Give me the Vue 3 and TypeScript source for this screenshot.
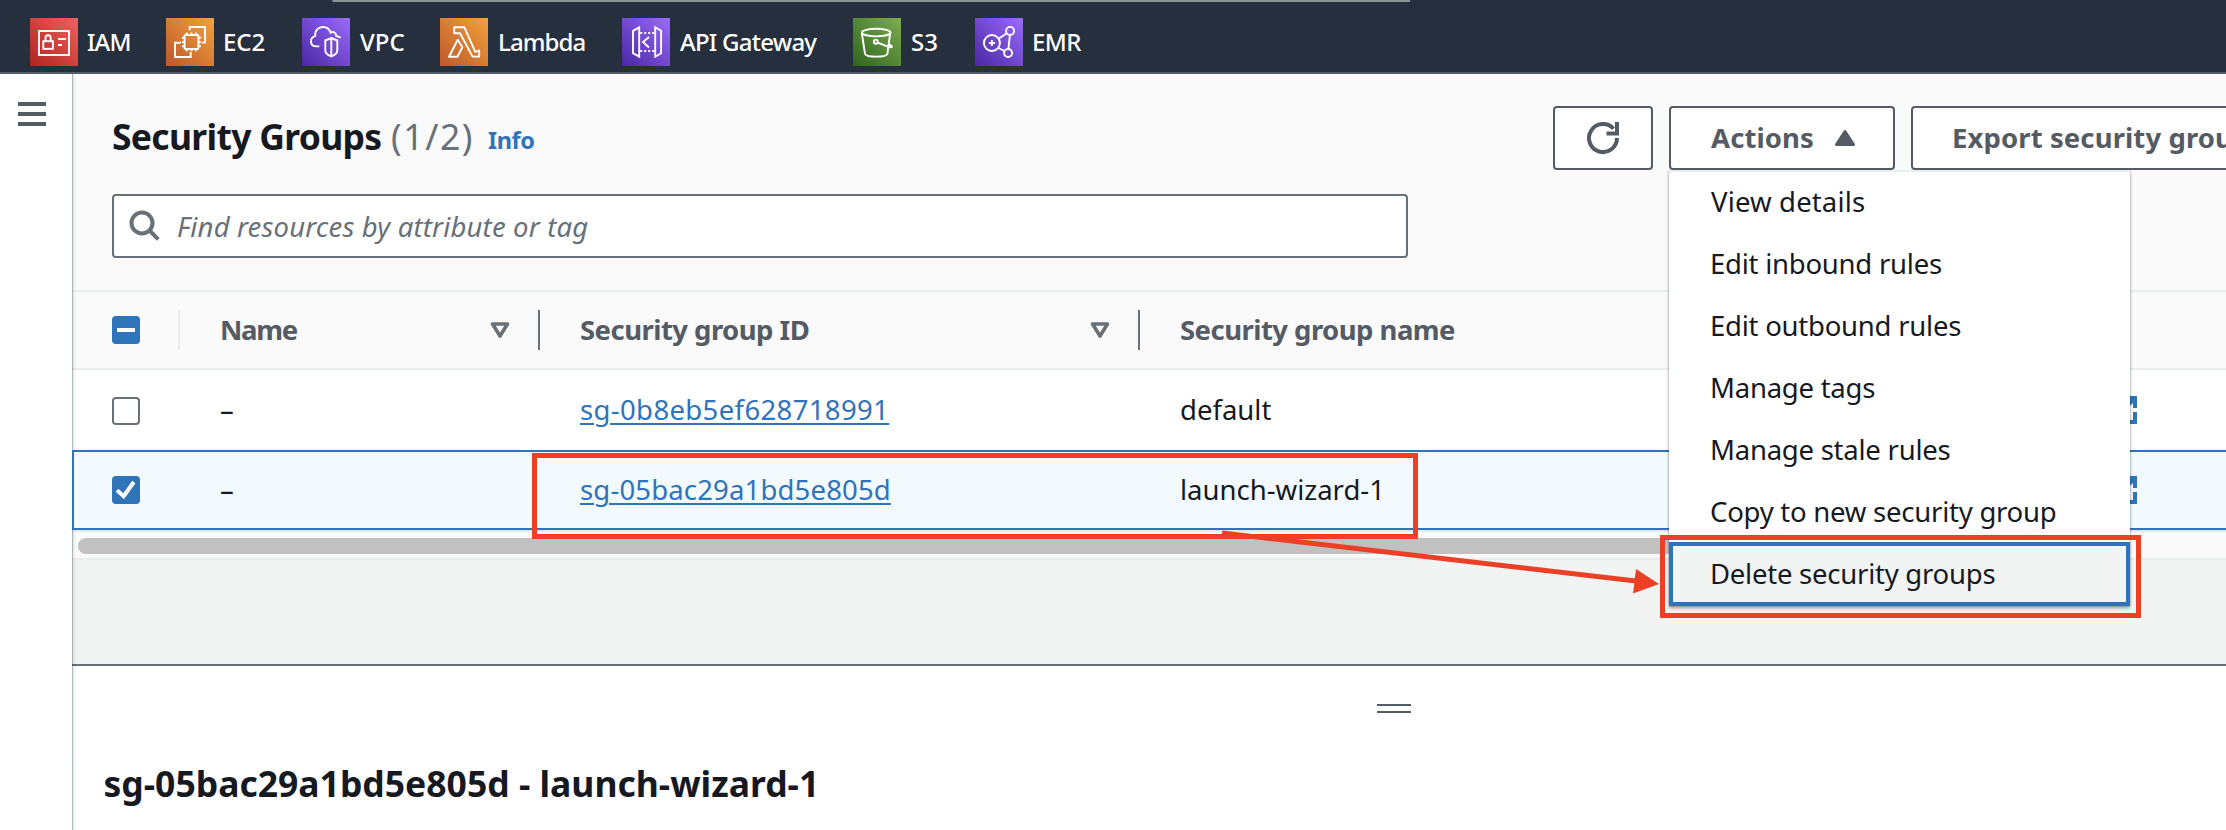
<script setup lang="ts">
interface Service { name: string; icon: string; tone: string; cls: string }
interface GroupRow { id: string; name: string; selected: boolean }

const services: Service[] = [
  { name: 'IAM', icon: 'iam', tone: 'red', cls: 'w-iam' },
  { name: 'EC2', icon: 'ec2', tone: 'orange', cls: 'w-ec2' },
  { name: 'VPC', icon: 'vpc', tone: 'purple', cls: 'w-vpc' },
  { name: 'Lambda', icon: 'lambda', tone: 'orange', cls: 'w-lambda' },
  { name: 'API Gateway', icon: 'api', tone: 'purple', cls: 'w-api' },
  { name: 'S3', icon: 's3', tone: 'green', cls: 'w-s3' },
  { name: 'EMR', icon: 'emr', tone: 'purple', cls: 'w-emr' },
]

const rows: GroupRow[] = [
  { id: 'sg-0b8eb5ef628718991', name: 'default', selected: false },
  { id: 'sg-05bac29a1bd5e805d', name: 'launch-wizard-1', selected: true },
]

const actions: string[] = [
  'View details',
  'Edit inbound rules',
  'Edit outbound rules',
  'Manage tags',
  'Manage stale rules',
  'Copy to new security group',
  'Delete security groups',
]
</script>

<template>
  <div class="page">
    <header class="topbar">
      <span class="topbar-edge"></span>
      <a v-for="s in services" :key="s.name" class="service" :class="s.cls">
        <svg class="service-icon" :class="s.tone" viewBox="0 0 48 48" fill="none" stroke="#fff" stroke-width="1.9">
          <g v-if="s.icon === 'iam'">
            <rect x="9" y="13" width="30" height="24" />
            <rect x="13.3" y="23.2" width="9.6" height="7.6" />
            <path d="M15.5 23v-3.2a2.6 2.6 0 0 1 5.2 0V23M28 21h8M28 27h4" />
          </g>
          <g v-else-if="s.icon === 'ec2'">
            <rect x="18.6" y="17" width="13.8" height="14" rx="1" />
            <path d="M20.8 17v-2.6M25.5 17v-2.6M30 17v-2.6M20.8 31v2.2M25.5 31v2.2M30 31v2.2M18.6 19.7H16M18.6 24H16M18.6 28.3H16M32.4 19.7h2.4M32.4 24h2.4M32.4 28.3h2.4" />
            <path d="M23.7 12.2V9H39v15.6h-3.4M15 24.8H9V39h15.7v-5" />
          </g>
          <g v-else-if="s.icon === 'vpc'">
            <path d="M17.3 28.4h-2.6C11 28.4 9 26.2 9 23.4c0-2.8 1.8-4.7 4.3-5.5C12.6 12.400 16.5 9 21 9c4.2 0 6.5 2.3 7.6 5.7 2.6-1.7 5.5-.3 5.7 3.300 1.7.3 3 .9 4.3 1.7" />
            <path d="M29.3 20l6 2.5v10c0 3-2.6 4.6-6 5.9-3.400-1.300-6-2.9-6-5.9v-10zM29.3 20v18.3" />
          </g>
          <g v-else-if="s.icon === 'lambda'" stroke-linejoin="round">
            <path d="M14.2 9.3h10.2l10.9 24.5 3.9-1.3v6.1h-6.6L20 15.2h-5.8z" />
            <path d="M17.7 21.8l4.7 7.4-5 9.5H9z" />
          </g>
          <g v-else-if="s.icon === 'api'">
            <path d="M17.2 9.3L11 12.8v22.4l6.2 3.5zM33.2 9.3l5.9 3.5v22.4l-5.9 3.5zM27 19l-6 5 6 5.5" />
            <path stroke-dasharray="2 2" d="M18.2 15h14M18.2 33h14" />
          </g>
          <g v-else-if="s.icon === 's3'">
            <ellipse cx="23.2" cy="14.6" rx="14.4" ry="3.8" />
            <path d="M8.8 15l3.2 20.7c1 3.9 21.4 3.9 22.4 0l2.8-20.7" />
            <circle cx="22.8" cy="23.8" r="2" />
            <path d="M24.6 24.7l10.9 4.2c2.3.7 3.5.5 3.5-.4 0-.6-1-1.3-2.9-2.2" />
          </g>
          <g v-else>
            <circle cx="16.9" cy="25" r="8" />
            <circle cx="35.1" cy="12.9" r="4" />
            <circle cx="33.1" cy="35" r="4" />
            <path d="M16.9 22v6M13.9 25h6M23.6 20.7l8.2-5.5M23.4 30l6.2 3M34.9 17l-1.5 14" />
          </g>
        </svg>
        <span>{{ s.name }}</span>
      </a>
    </header>

    <div class="body">
      <aside class="rail">
        <div class="burger"><i></i><i></i><i></i></div>
      </aside>

      <main class="main">
        <section class="panel-head">
          <div class="title-row">
            <h1>Security Groups</h1>
            <span class="count">(1/2)</span>
            <a class="info">Info</a>
            <div class="buttons">
              <button class="btn refresh">
                <svg width="34" height="34" viewBox="0 0 34 34" fill="none" stroke="#545b64" stroke-width="4">
                  <path d="M31 17A14 14 0 1 1 27.5 7.8" />
                  <path d="M31 1v11.5H20.5" />
                </svg>
              </button>
              <button class="btn actions">
                <span>Actions</span>
                <svg width="22" height="18" viewBox="0 0 22 18"><path d="M11 2.5L19.5 15.5H2.5z" fill="#545b64" stroke="#545b64" stroke-width="3" stroke-linejoin="round" /></svg>
              </button>
              <button class="btn export">Export security groups to CSV</button>
            </div>
          </div>
          <div class="search">
            <svg width="32" height="32" viewBox="0 0 32 32" fill="none" stroke="#687078" stroke-width="4">
              <circle cx="13" cy="13" r="10.5" />
              <path d="M20.5 20.5l8.8 8.8" />
            </svg>
            <span>Find resources by attribute or tag</span>
          </div>
        </section>

        <div class="grid head">
          <div class="cell pick"><span class="box on"><i class="minus"></i></span></div>
          <div class="cell name"><span class="t-name">Name</span>
            <svg width="20" height="17" viewBox="0 0 20 17"><path d="M2.5 2h15L10 14z" fill="none" stroke="#687078" stroke-width="3.6" stroke-linejoin="round" /></svg>
          </div>
          <div class="cell gid"><span>Security group ID</span>
            <svg width="20" height="17" viewBox="0 0 20 17"><path d="M2.5 2h15L10 14z" fill="none" stroke="#687078" stroke-width="3.6" stroke-linejoin="round" /></svg>
          </div>
          <div class="cell gname"><span>Security group name</span></div>
        </div>

        <div v-for="r in rows" :key="r.id" class="grid row" :class="{ selected: r.selected }">
          <div class="cell pick">
            <span class="box" :class="{ on: r.selected }">
              <svg v-if="r.selected" width="28" height="28" viewBox="0 0 28 28" fill="none" stroke="#fff" stroke-width="4"><path d="M5 14.2l6.7 6L21.8 6" /></svg>
            </span>
          </div>
          <div class="cell name"><span>–</span></div>
          <div class="cell gid"><a class="link">{{ r.id }}</a></div>
          <div class="cell gname"><span>{{ r.name }}</span></div>
          <div class="cell ext">
            <svg width="28" height="28" viewBox="0 0 28 28" fill="none" stroke="#2f73b8" stroke-width="4">
              <path d="M12 2H2v24h24V16M16 2h10v10M26 2L12 16" />
            </svg>
          </div>
        </div>

        <div class="scroll"><span></span></div>
        <div class="filler"></div>

        <section class="split">
          <div class="handle"></div>
          <h2>sg-05bac29a1bd5e805d - launch-wizard-1</h2>
        </section>
      </main>
    </div>

    <ul class="menu">
      <li v-for="(a, i) in actions" :key="a" :class="{ focused: i === actions.length - 1 }">{{ a }}</li>
    </ul>

    <div class="mark mark-row"></div>
    <div class="mark mark-item"></div>
    <svg class="arrow" width="460" height="80" viewBox="0 0 460 80">
      <path d="M22 13L436 61" stroke="#eb4026" stroke-width="5" />
      <path d="M459 64L436 49L433 73.5z" fill="#eb4026" />
    </svg>
  </div>
</template>

<style>
body { margin: 0; overflow: hidden; }
</style>

<style scoped>
.page {
  position: relative;
  display: flex;
  flex-direction: column;
  width: 2226px;
  height: 830px;
  overflow: hidden;
  background: #fff;
  color: #16191f;
  font-family: "Noto Sans", "Open Sans", sans-serif;
  font-size: 27.5px;
  line-height: 36px;
}
.page * { box-sizing: border-box; }
.page svg { display: block; flex: none; }

.topbar {
  position: relative;
  flex: none;
  display: flex;
  align-items: center;
  height: 74px;
  padding: 12px 0 0 30px;
  background: #262f3e;
  border-bottom: 2px solid #545b69;
}
.topbar-edge {
  position: absolute;
  left: 332px;
  top: 0;
  width: 1078px;
  height: 2px;
  border-radius: 0 0 0 3px;
  background: #879596;
}
.service { display: flex; align-items: center; gap: 9px; color: #fff; font-size: 24px; font-weight: 500; white-space: nowrap; flex: none; }
.service-icon { width: 48px; height: 48px; }
.red { background: linear-gradient(45deg, #ae2320, #f0625d); }
.orange { background: linear-gradient(45deg, #bd582d, #f3a23a); }
.purple { background: linear-gradient(45deg, #4927a4, #9b6bfb); }
.green { background: linear-gradient(45deg, #2f641c, #7cad50); }
.w-iam { width: 136px; letter-spacing: -0.9px; }
.w-ec2 { width: 136px; letter-spacing: -0.1px; }
.w-vpc { width: 138px; gap: 10px; }
.w-lambda { width: 182px; gap: 10px; letter-spacing: -0.9px; }
.w-api { width: 231px; gap: 10px; letter-spacing: -0.75px; }
.w-s3 { width: 122px; gap: 10px; }
.w-emr { letter-spacing: -0.6px; }

.body { flex: 1; display: flex; min-height: 0; }
.rail { position: relative; width: 72px; flex: none; padding: 28px 0 0 18px; background: #fff; }
.rail::after {
  content: "";
  position: absolute;
  left: 72px;
  top: 0;
  bottom: 0;
  width: 4px;
  background: linear-gradient(90deg, rgba(0, 28, 36, 0.3) 0 1px, rgba(0, 28, 36, 0.1) 1px, rgba(0, 28, 36, 0));
}
.burger { display: flex; flex-direction: column; gap: 6px; width: 28px; }
.burger i { height: 4px; background: #545b64; }

.main { flex: 1; min-width: 0; display: flex; flex-direction: column; }
.panel-head { height: 218px; flex: none; padding: 32px 0 0 40px; background: #fafafa; border-bottom: 2px solid #eaeded; }
.title-row { display: flex; height: 64px; align-items: center; white-space: nowrap; }
h1 { margin: -5px 0 0; font-size: 35.5px; line-height: 48px; font-weight: 700; letter-spacing: -0.7px; width: 279px; flex: none; }
.count { width: 97px; flex: none; margin-top: -5px; line-height: 48px; font-size: 35.5px; letter-spacing: 1.6px; color: #687078; }
.info { flex: none; font-size: 23.5px; font-weight: 700; letter-spacing: -0.4px; color: #2f73b8; width: 60px; margin-top: 4px; }
.buttons { display: flex; gap: 16px; margin-left: 1005px; }
.btn {
  flex: none;
  display: flex;
  align-items: center;
  height: 64px;
  margin: 0;
  padding: 0 0 1px;
  border: 2px solid #545b64;
  border-radius: 4px;
  background: #fff;
  color: #545b64;
  font: 700 27.5px/36px "Noto Sans", "Open Sans", sans-serif;
  letter-spacing: 0.1px;
  white-space: nowrap;
}
.refresh { width: 100px; justify-content: center; }
.actions { width: 226px; padding-left: 40px; }
.actions svg { margin-left: 20px; }
.export { width: 462px; padding-left: 39px; }
.search {
  display: flex;
  align-items: center;
  gap: 16px;
  width: 1296px;
  height: 64px;
  margin-top: 24px;
  padding-left: 15px;
  border: 2px solid #687078;
  border-radius: 4px;
  background: #fff;
  color: #687078;
  font-style: italic;
  letter-spacing: 0.17px;
}
.search span { padding-top: 1px; }

.grid { flex: none; display: grid; grid-template-columns: 108px 360px 600px 872px 1fr; align-items: center; }
.cell { display: flex; align-items: center; white-space: nowrap; }
.pick { padding-left: 40px; }
.name, .gid, .gname { padding-left: 40px; }
.head { height: 78px; background: #fafafa; border-bottom: 2px solid #eaeded; color: #545b64; font-weight: 700; letter-spacing: -0.54px; }
.head .cell { height: 40px; }
.head .pick { border-right: 2px solid #eaeded; }
.head .name, .head .gid { justify-content: space-between; padding-right: 28px; border-right: 2px solid #687078; }
.t-name { letter-spacing: -1.3px; }
.row { height: 80px; background: #fff; }
.row .cell { height: 76px; }
.row:not(.selected) .pick { padding-top: 2px; }
.row.selected {
  margin-right: -4px;
  position: relative;
  border: 2px solid #2f73b8;
  background: #f2fafd;
  grid-template-columns: 106px 360px 600px 872px 1fr;
}
.row.selected .pick { padding-left: 38px; }
.row .ext { margin-left: 97px; }
.gid .link { color: #2f73b8; letter-spacing: 0.36px; text-decoration: underline; text-decoration-thickness: 2px; text-underline-offset: 3px; }
.selected .gid .link { letter-spacing: 0.16px; }
.box { display: flex; width: 28px; height: 28px; align-items: center; justify-content: center; border: 2px solid #687078; border-radius: 4px; background: #fff; }
.box.on { border: 0; background: #2f73b8; }
.minus { width: 18px; height: 4px; background: #fff; }

.scroll { flex: none; height: 30px; padding: 6px 0 0 6px; background: #fafafa; border-top: 2px solid #e6e9e9; border-bottom: 2px solid #eaeded; }
.scroll span { display: block; width: 1840px; height: 16px; border-radius: 8px; background: #c1c1c1; }
.filler { flex: none; height: 104px; background: #f2f3f3; }
.split { flex: 1; border-top: 2px solid #687078; background: #fff; }
.handle { width: 34px; height: 9px; margin: 38px 0 0 1305px; border-top: 2px solid #545b64; border-bottom: 2px solid #545b64; }
h2 { margin: 46px 0 0 31.5px; font-size: 35.5px; line-height: 48px; font-weight: 700; white-space: nowrap; }

.menu {
  position: absolute;
  left: 1669px;
  top: 170px;
  width: 461px;
  height: 436px;
  margin: 0;
  padding: 0;
  list-style: none;
  background: #fff;
  border-top: 2px solid #eaeded;
  box-shadow: 0 2px 3px rgba(0, 28, 36, 0.4), 0 0 1px rgba(0, 28, 36, 0.4);
  clip-path: inset(0 -4px -6px -4px);
}
.menu li { height: 62px; padding: 12px 0 0 41px; letter-spacing: -0.24px; white-space: nowrap; }
.menu li:first-child { padding-left: 42px; letter-spacing: 0.15px; }
.menu li.focused { height: 64px; margin-top: -2px; padding: 10px 0 0 37px; border: 4px solid #2f73b8; background: #f2f3f3; }

.mark { position: absolute; border: 5px solid #eb4026; }
.mark-row { left: 532px; top: 453px; width: 886px; height: 86px; }
.mark-item { left: 1660px; top: 535px; width: 481px; height: 83px; }
.arrow { position: absolute; left: 1200px; top: 520px; }
</style>
